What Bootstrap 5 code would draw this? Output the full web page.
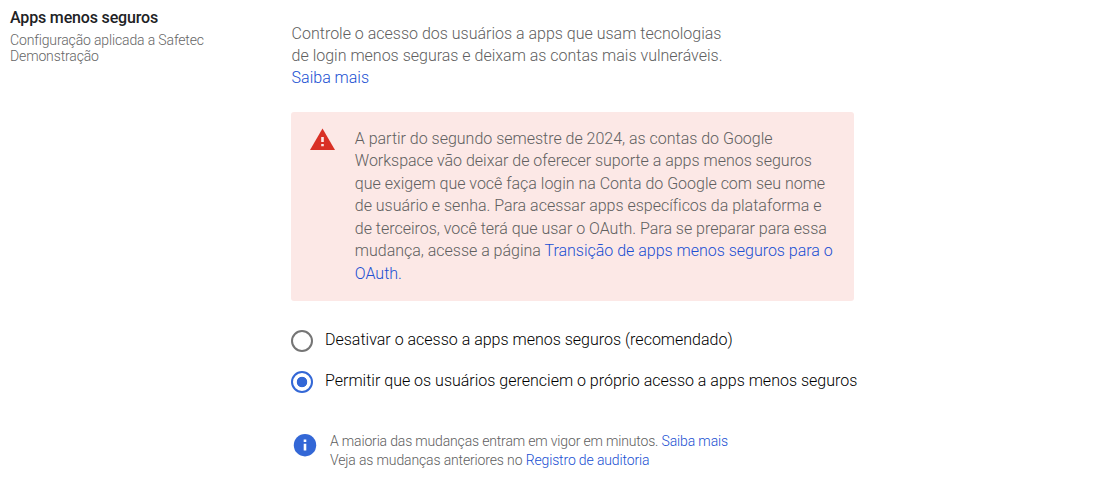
<!DOCTYPE html>
<html lang="pt-BR">
<head>
<meta charset="utf-8">
<meta name="viewport" content="width=device-width, initial-scale=1">
<title>Apps menos seguros</title>
<link href="https://cdn.jsdelivr.net/npm/bootstrap@5.3.0/dist/css/bootstrap.min.css" rel="stylesheet">
<style>
body{font-family:Roboto,"Liberation Sans",sans-serif;color:#202124;background:#fff;font-size:16px}
a{color:#204fd2;text-decoration:none}
h1{font-size:16px;line-height:20px;font-weight:500;margin:0 0 4px;letter-spacing:-.16px}
.side-col{width:291px;padding:8px 0 0 10px}
.scope{font-size:14px;line-height:16px;color:#666;margin:0;width:215px;font-weight:300;letter-spacing:-.14px}
.intro{line-height:22px;color:#606060;margin:23px 0 23px .6px;font-weight:300}
.notice{width:563px;height:189px;background:#fce8e6;border:0;border-radius:3px;padding:16px 20px 0 19px;margin:0 0 28px;color:#606060;line-height:22.5px;font-weight:300;letter-spacing:-.01px}
.notice p{margin:-.25px 0 0 19.8px}
.choice{height:24px;margin:0 0 17px;padding:0;gap:12px}
.choice label{font-weight:300;color:#000;position:relative;top:-1px}
.choice .form-check-input{width:22px;height:22px;margin:0;float:none;border:2px solid #757575;background-image:none;box-shadow:none}
.choice .form-check-input:checked{border-color:#3367d6;background:radial-gradient(circle,#3367d6 4.9px,#fff 5.6px)}
.info{font-size:14px;line-height:19px;color:#606060;margin:38px 0 0 2px;gap:13px;font-weight:300;letter-spacing:-.14px}
.effect{letter-spacing:-.165px}
</style>
</head>
<body>
<main class="d-flex">
<section class="side-col flex-shrink-0">
<h1>Apps menos seguros</h1>
<p class="scope">Configuração aplicada a Safetec<br>Demonstração</p>
</section>
<section class="flex-shrink-0">
<p class="intro">Controle o acesso dos usuários a apps que usam tecnologias<br>de login menos seguras e deixam as contas mais vulneráveis.<br><a href="#">Saiba mais</a></p>
<div class="alert notice d-flex align-items-start" role="alert">
<svg class="flex-shrink-0" width="25" height="22" viewBox="0 0 25 22"><path fill="#d93025" d="M12.5 .5 25 22H0Z"/><path fill="#fce8e6" d="M11.2 9h2.6v5h-2.6zm0 7h2.6v2.3h-2.6z"/></svg>
<p>A partir do segundo semestre de 2024, as contas do Google<br>Workspace vão deixar de oferecer suporte a apps menos seguros<br>que exigem que você faça login na Conta do Google com seu nome<br>de usuário e senha. Para acessar apps específicos da plataforma e<br>de terceiros, você terá que usar o OAuth. Para se preparar para essa<br>mudança, acesse a página <a href="#">Transição de apps menos seguros para o<br>OAuth.</a></p>
</div>
<div class="form-check choice d-flex align-items-center"><input class="form-check-input" type="radio" name="access" id="off"><label for="off">Desativar o acesso a apps menos seguros (recomendado)</label></div>
<div class="form-check choice d-flex align-items-center"><input class="form-check-input" type="radio" name="access" id="allow" checked><label for="allow">Permitir que os usuários gerenciem o próprio acesso a apps menos seguros</label></div>
<div class="info d-flex align-items-start">
<svg class="flex-shrink-0" width="24" height="25" viewBox="0 0 24 25"><circle cx="12" cy="13.2" r="11.2" fill="#3367d6"/><path fill="#fff" d="M10.7 7.5h2.6V10h-2.6zm0 4.3h2.6v6.7h-2.6z"/></svg>
<div><span class="effect">A maioria das mudanças entram em vigor em minutos.</span> <a href="#">Saiba mais</a><br>Veja as mudanças anteriores no <a href="#">Registro de auditoria</a></div>
</div>
</section>
</main>
<script src="https://cdn.jsdelivr.net/npm/bootstrap@5.3.0/dist/js/bootstrap.bundle.min.js"></script>
</body>
</html>
